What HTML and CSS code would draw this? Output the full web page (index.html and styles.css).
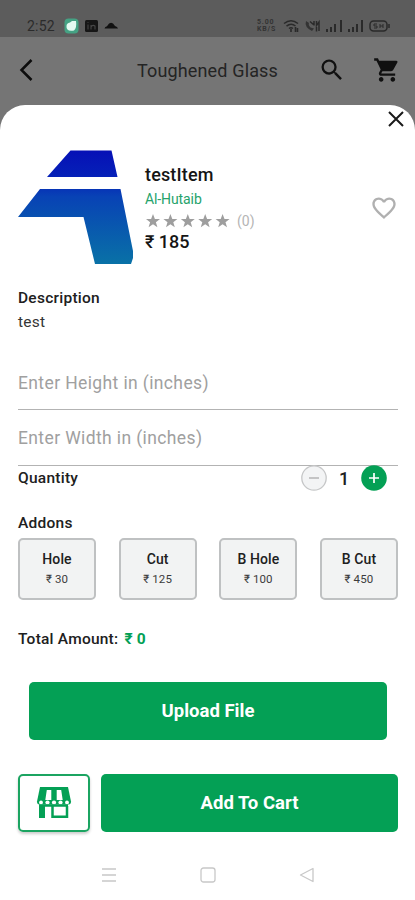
FILE: index.html
```html
<!DOCTYPE html>
<html lang="en">
<head>
<meta charset="utf-8">
<title>Toughened Glass</title>
<link rel="stylesheet" href="styles.css">
</head>
<body>
<div class="status">
  <span class="time">2:52</span>
  <svg class="st-left" width="56" height="16" viewBox="0 0 56 16">
    <rect x="0.5" y="0.5" width="14" height="15" rx="4" fill="#45a284"/>
    <path d="M2.500 8Q2.500 5 6 4.500L8 3H12Q13 10 10 12.500Q2 14 2.500 8Z" fill="#e4faf2"/>
    <rect x="21" y="2" width="13" height="12" rx="1.500" fill="#161616"/>
    <path d="M24 6.500V11.500M27 11.500V7M27 9Q28.500 6.500 31 8V11.500M24 4.300V5" stroke="#484848" stroke-width="1.100" fill="none"/>
    <path d="M40.500 10.500Q41 8.500 43 8.200Q47 1.500 51 8Q53.500 8.500 54 10.500Z" fill="#111"/>
  </svg>
  <span class="rate"><span>5.00</span><span>KB/S</span></span>
  <svg class="st-right" width="108" height="14" viewBox="0 0 108 14" fill="none" stroke="#2a2a2a" stroke-width="1.500">
    <path d="M1 4.500Q8 -1 15 4.500M3.500 7.200Q8 3.500 12.500 7M6 9.500Q8 8 10 9.500"/>
    <path d="M8 10V13M12.500 8V13M14.500 9V13" stroke-width="1.600"/>
    <path d="M23 2Q21 8 29 12L31 9.500L27.500 8.500Q25 6 26 4Z" fill="#333" stroke="none"/>
    <path d="M27 2.500L31 6M31 2V6.500M33.500 2V6.500L36 3V12M33.500 8V12.500"/>
    <path d="M44 10V13M48 8V13M52 5V13M58 1V13" stroke-width="2"/>
    <path d="M66 10V13M70 8V13M74 5V13M79 1V13" stroke-width="2"/>
    <rect x="87" y="2" width="17" height="10" rx="3.500"/>
    <path d="M106 5V9"/>
    <path d="M94 5H91V7H94V9H91M97 5V9M100 5V9M97 7H100" stroke-width="1"/>
  </svg>
</div>
<header class="appbar">
  <svg class="back" width="16" height="24" viewBox="0 0 16 24"><path d="M13.500 2L3.500 12L13.500 22" fill="none" stroke="#0c0c0c" stroke-width="2.500"/></svg>
  <h1>Toughened Glass</h1>
  <svg class="search" width="28" height="28" viewBox="0 0 24 24" fill="#101010"><path d="M15.500 14h-.79l-.28-.27A6.471 6.471 0 0 0 16 9.500 6.500 6.500 0 1 0 9.500 16c1.610 0 3.090-.59 4.230-1.570l.27.28v.79l5 4.990L20.490 19l-4.990-5zm-6 0C7.010 14 5 11.990 5 9.500S7.010 5 9.500 5 14 7.010 14 9.500 11.990 14 9.500 14z"/></svg>
  <svg class="cart" width="28" height="28" viewBox="0 0 24 24" fill="#101010"><path d="M7 18c-1.100 0-1.990.9-1.990 2S5.900 22 7 22s2-.9 2-2-.9-2-2-2zM1 2v2h2l3.600 7.590-1.350 2.450c-.16.280-.25.610-.25.960 0 1.100.9 2 2 2h12v-2H7.420c-.14 0-.25-.11-.25-.25l.030-.12.900-1.630h7.450c.750 0 1.410-.41 1.750-1.030l3.580-6.490A1 1 0 0 0 20 4H5.210l-.94-2H1zm16 16c-1.100 0-1.990.9-1.990 2s.89 2 1.990 2 2-.9 2-2-.9-2-2-2z"/></svg>
</header>
<main class="sheet">
  <div class="close-row">
    <svg width="18" height="18" viewBox="0 0 18 18"><path d="M2 2L16 16M16 2L2 16" stroke="#1a1a1a" stroke-width="2" fill="none"/></svg>
  </div>
  <section class="item">
    <svg class="logo" width="116" height="116" viewBox="0 0 116 116">
      <defs><linearGradient id="g" x1="0" y1="0" x2="0" y2="116" gradientUnits="userSpaceOnUse"><stop offset="0" stop-color="#0610b6"/><stop offset=".25" stop-color="#0522b8"/><stop offset=".4" stop-color="#0842b5"/><stop offset="1" stop-color="#0973a6"/></linearGradient></defs>
      <path d="M52.500 0.500H93.500L99.500 27H29Z M22 39H102.500L115 101V108L113 114H77L65.500 67H0Z" fill="url(#g)"/>
    </svg>
    <div class="info">
      <h2>testItem</h2>
      <p class="brand">Al-Hutaib</p>
      <div class="rating">
        <svg width="87" height="16" viewBox="0 0 87 16" fill="#9e9e9e">
          <defs><path id="s" d="M8 1L9.900 6H15L10.900 9.200L12.400 14.300L8 11.300L3.600 14.300L5.100 9.200L1 6H6.100Z"/></defs>
          <use href="#s"/><use href="#s" x="17.400"/><use href="#s" x="34.800"/><use href="#s" x="52.200"/><use href="#s" x="69.600"/>
        </svg>
        <span>(0)</span>
      </div>
      <p class="price">₹ 185</p>
    </div>
    <svg class="heart" width="28" height="28" viewBox="0 0 24 24" fill="#b0b0b0"><path d="M16.500 3c-1.740 0-3.410.81-4.500 2.090C10.910 3.810 9.240 3 7.500 3 4.420 3 2 5.420 2 8.500c0 3.780 3.400 6.860 8.550 11.540L12 21.350l1.450-1.320C18.600 15.360 22 12.280 22 8.500 22 5.420 19.580 3 16.500 3zm-4.400 15.550l-.1.100-.1-.1C7.140 14.240 4 11.390 4 8.500 4 6.500 5.500 5 7.500 5c1.540 0 3.040.99 3.570 2.360h1.870C13.460 5.990 14.960 5 16.500 5c2 0 3.500 1.500 3.500 3.500 0 2.890-3.140 5.740-7.900 10.050z"/></svg>
  </section>
  <section class="desc">
    <h3>Description</h3>
    <p>test</p>
  </section>
  <div class="field first"><span>Enter Height in (inches)</span></div>
  <div class="field"><span>Enter Width in (inches)</span></div>
  <section class="quantity">
    <h3>Quantity</h3>
    <svg class="minus" width="26" height="26" viewBox="0 0 26 26"><circle cx="13" cy="13" r="12.200" fill="#f3f4f5" stroke="#c6c7c8" stroke-width="1.300"/><path d="M8 13H18" stroke="#b4b4b4" stroke-width="1.500"/></svg>
    <span class="count">1</span>
    <svg class="plus" width="26" height="26" viewBox="0 0 26 26"><circle cx="13" cy="13" r="12.800" fill="#04a055"/><path d="M8 13H18M13 8V18" stroke="#fff" stroke-width="1.700"/></svg>
  </section>
  <h3 class="addons-title">Addons</h3>
  <section class="addons">
    <div class="addon"><b>Hole</b><span>₹ 30</span></div>
    <div class="addon"><b>Cut</b><span>₹ 125</span></div>
    <div class="addon"><b>B Hole</b><span>₹ 100</span></div>
    <div class="addon"><b>B Cut</b><span>₹ 450</span></div>
  </section>
  <p class="total">Total Amount: <b>₹ 0</b></p>
  <div class="btn upload">Upload File</div>
  <div class="actions">
    <div class="store">
      <svg width="36" height="34" viewBox="0 0 36 34">
        <path d="M4 1H32L35 15.500Q35 18.500 32.500 18.500H3.500Q1 18.500 1 15.500Z" fill="#04a055"/>
        <path d="M10.800 4H15.300V14H9.300ZM20.700 4H25.200L26.700 14H20.700Z" fill="#fff"/>
        <g fill="#fff"><circle cx="5" cy="16.500" r="1.900"/><circle cx="11.500" cy="16.500" r="2.100"/><circle cx="18" cy="16.500" r="2.100"/><circle cx="24.500" cy="16.500" r="2.100"/><circle cx="31" cy="16.500" r="1.900"/></g>
        <path d="M3 19H9V32H3Z" fill="#04a055"/>
        <path d="M3 19.500H32M16.500 20V30.800H31V20" fill="none" stroke="#04a055" stroke-width="2.500"/>
      </svg>
    </div>
    <div class="btn add">Add To Cart</div>
  </div>
</main>
<nav class="nav">
  <svg width="16" height="16" viewBox="0 0 16 16"><path d="M1 2H15M1 8H15M1 14H15" stroke="#c8c8c8" stroke-width="1.300"/></svg>
  <svg width="16" height="16" viewBox="0 0 16 16"><rect x="1" y="1" width="14" height="14" rx="2.500" fill="none" stroke="#c8c8c8" stroke-width="1.300"/></svg>
  <svg width="16" height="16" viewBox="0 0 16 16"><path d="M14 1.500V14.500L1.500 8Z" fill="none" stroke="#c8c8c8" stroke-width="1.300" stroke-linejoin="round"/></svg>
</nav>
</body>
</html>
```
FILE: styles.css
```css
* { box-sizing: border-box; margin: 0; padding: 0; }
body {
  width: 415px; height: 900px; overflow: hidden;
  display: flex; flex-direction: column;
  background: #757575; color: #202020;
  font-family: Roboto, "Noto Sans", sans-serif;
}
svg { display: block; flex: none; }
h1, h2, h3, p, span { white-space: nowrap; }

.status { height: 37px; flex: none; background: #5c5c5c; display: flex; align-items: center; padding: 15px 0 0 27px; }
.time { font-size: 14px; color: #2b2b2b; width: 37px; letter-spacing: .2px; }
.rate { margin-left: 137px; width: 26px; display: flex; flex-direction: column; font-size: 7px; line-height: 7px; font-weight: 700; color: #333; letter-spacing: .8px; }

.appbar { height: 68px; flex: none; display: flex; align-items: center; padding: 0 0 2px 18px; }
.appbar h1 { margin-left: 103px; width: 181px; font-size: 18px; font-weight: 400; letter-spacing: .15px; color: #242424; }
.cart { margin-left: 27px; }

.sheet { height: 745px; flex: none; background: #fff; border-radius: 25px 25px 0 0; padding: 0 17px 0 18px; }
.close-row { height: 45px; display: flex; justify-content: flex-end; padding-top: 5px; margin-right: -7px; }
.item { display: flex; height: 116px; }
.info { margin-left: 11px; padding-top: 13px; }
.info h2 { font-size: 18px; line-height: 24px; font-weight: 500; letter-spacing: .15px; color: #151515; }
.brand { font-size: 14px; line-height: 24px; letter-spacing: -.1px; color: #26a36b; }
.rating { display: flex; align-items: center; height: 20px; }
.rating span { margin-left: 5px; font-size: 14px; color: #b5b5b5; }
.price { font-size: 18px; line-height: 22px; font-weight: 500; color: #151515; }
.heart { margin: 44px 0 0 auto; }

h3 { font-size: 15.500px; font-weight: 500; line-height: 24px; letter-spacing: .25px; color: #202020; }
.desc { margin-top: 20px; height: 70px; }
.desc p { font-size: 15.500px; line-height: 24px; color: #353535; letter-spacing: .2px; }
.field { height: 56px; border-bottom: 1.500px solid #b3b3b3; font-size: 17.500px; color: #a0a0a0; display: flex; align-items: center; letter-spacing: .38px; }
.field.first { height: 54px; }
.quantity { height: 26px; margin-top: -1px; display: flex; align-items: center; }
.quantity h3 { width: 283px; }
.count { width: 34px; text-align: center; font-size: 18px; font-weight: 500; }
.addons-title { margin-top: 20px; }
.addons { display: grid; grid-template-columns: repeat(4, 78px); justify-content: space-between; margin-top: 3px; }
.addon { height: 62px; border: 2px solid #bfc1c2; border-radius: 5px; background: #f2f3f3; display: flex; flex-direction: column; align-items: center; padding-top: 9px; }
.addon b { font-size: 14px; line-height: 20px; font-weight: 500; letter-spacing: .1px; }
.addon span { font-size: 11.500px; line-height: 20px; color: #3c3c3c; letter-spacing: .1px; }
.total { margin-top: 27px; font-size: 15.500px; line-height: 24px; font-weight: 500; letter-spacing: .22px; }
.total b { color: #04a055; margin-left: 2px; }
.btn { background: #04a055; color: #fff; border-radius: 5px; display: flex; align-items: center; justify-content: center; height: 58px; font-size: 18.500px; font-weight: 700; }
.upload { margin: 31px 11px 0; }
.actions { display: flex; gap: 11px; margin-top: 34px; }
.add { flex: 1; }
.store { width: 72px; height: 58px; border: 2px solid #1ba461; border-radius: 5px; display: flex; align-items: center; justify-content: center; box-shadow: 0 2px 3px #0003; }
.nav { height: 50px; flex: none; background: #fff; display: flex; align-items: center; justify-content: center; gap: 83px; }
```
